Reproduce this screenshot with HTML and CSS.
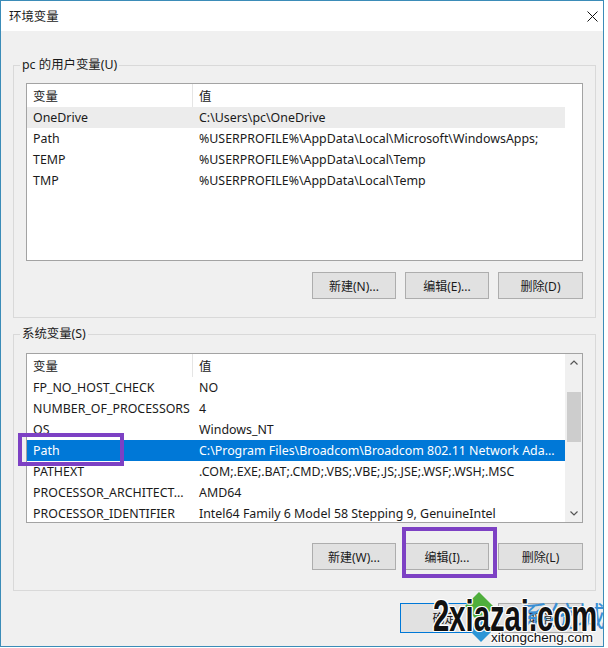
FILE: index.html
```html
<!DOCTYPE html>
<html lang="zh-CN">
<head>
    <meta charset="UTF-8">
    <meta name="viewport" content="width=device-width, initial-scale=1.0">
    <title>环境变量</title>
    <link rel="stylesheet" href="styles.css">
</head>
<body>
    <div class="window">
        <div class="titlebar">
            <span class="title">环境变量</span>
            <span class="close">
                <svg width="11" height="11" viewBox="0 0 11 11"><path d="M0.5 0.5L10.5 10.5M10.5 0.5L0.5 10.5" stroke="#111" stroke-width="1" fill="none"/></svg>
            </span>
        </div>

        <div class="content">
            <fieldset class="group group-user">
                <legend>pc 的用户变量(U)</legend>
                <div class="list list-user">
                    <div class="list-body">
                        <div class="row head"><span>变量</span><span>值</span></div>
                        <div class="row inactive"><span>OneDrive</span><span>C:\Users\pc\OneDrive</span></div>
                        <div class="row"><span>Path</span><span>%USERPROFILE%\AppData\Local\Microsoft\WindowsApps;</span></div>
                        <div class="row"><span>TEMP</span><span>%USERPROFILE%\AppData\Local\Temp</span></div>
                        <div class="row"><span>TMP</span><span>%USERPROFILE%\AppData\Local\Temp</span></div>
                    </div>
                    <div class="scroll-space"></div>
                </div>
                <div class="buttons">
                    <button class="btn">新建(N)...</button>
                    <button class="btn">编辑(E)...</button>
                    <button class="btn btn-wide">删除(D)</button>
                </div>
            </fieldset>

            <fieldset class="group group-system">
                <legend>系统变量(S)</legend>
                <div class="list list-system">
                    <div class="list-body">
                        <div class="row head"><span>变量</span><span>值</span></div>
                        <div class="row"><span>FP_NO_HOST_CHECK</span><span>NO</span></div>
                        <div class="row"><span>NUMBER_OF_PROCESSORS</span><span>4</span></div>
                        <div class="row"><span>OS</span><span>Windows_NT</span></div>
                        <div class="row selected"><span>Path</span><span>C:\Program Files\Broadcom\Broadcom 802.11 Network Ada...</span></div>
                        <div class="row"><span>PATHEXT</span><span>.COM;.EXE;.BAT;.CMD;.VBS;.VBE;.JS;.JSE;.WSF;.WSH;.MSC</span></div>
                        <div class="row"><span>PROCESSOR_ARCHITECT...</span><span>AMD64</span></div>
                        <div class="row"><span>PROCESSOR_IDENTIFIER</span><span>Intel64 Family 6 Model 58 Stepping 9, GenuineIntel</span></div>
                    </div>
                    <div class="scrollbar">
                        <div class="arrow">
                            <svg width="8" height="5" viewBox="0 0 8 5"><path d="M0.5 4.5L4 1L7.5 4.5" stroke="#555" stroke-width="1.2" fill="none"/></svg>
                        </div>
                        <div class="thumb"></div>
                        <div class="track-rest"></div>
                        <div class="arrow">
                            <svg width="8" height="5" viewBox="0 0 8 5"><path d="M0.5 0.5L4 4L7.5 0.5" stroke="#555" stroke-width="1.2" fill="none"/></svg>
                        </div>
                    </div>
                </div>
                <div class="buttons buttons-system">
                    <button class="btn">新建(W)...</button>
                    <button class="btn">编辑(I)...</button>
                    <button class="btn btn-wide">删除(L)</button>
                </div>
            </fieldset>

            <div class="dialog-buttons">
                <button class="btn btn-ok">确定</button>
                <button class="btn btn-cancel">取消</button>
            </div>
        </div>

        <!-- 标注框 -->
        <div class="mark mark-path"></div>
        <div class="mark mark-edit"></div>

        <!-- 水印 -->
        <div class="watermark">
            <svg class="wm-logo" width="40" height="54" viewBox="0 0 40 54">
                <polygon points="2,16 17,1 32,16 17,31" fill="#4fae3c"/>
                <polygon points="6,38 19,25 32,38 19,51" fill="#2c95d6"/>
            </svg>
            <span class="wm-cn">系统城</span>
            <span class="wm-big">2xiazai.com</span>
            <span class="wm-small">xitongcheng.com</span>
        </div>
    </div>
</body>
</html>
```

FILE: styles.css
```css
* {
    box-sizing: border-box;
}

body {
    margin: 0;
    background-color: #fff;
    font-family: "Noto Sans", "Noto Sans CJK SC", sans-serif;
    font-size: 12.4px;
    color: #1a1a1a;
}

.window {
    position: relative;
    width: 604px;
    height: 647px;
    border: 1px solid #3b8cb8;
    background-color: #f0f0f0;
    overflow: hidden;
}

.titlebar {
    height: 30px;
    background-color: #fff;
    display: flex;
    align-items: center;
    justify-content: space-between;
    padding: 0 5px 0 8px;
}

.close svg {
    display: block;
}

.content {
    padding: 0 7px 0 12px;
}

.group {
    margin: 26px 0 0;
    padding: 10px 12px 18px;
    border: 1px solid #d9d9d9;
    min-width: 0;
}

.group legend {
    padding: 0 2px;
    margin-left: -6px;
    line-height: 16px;
}

.group-system {
    margin-top: 8px;
    padding: 11px 12px 20px;
}

.list {
    display: flex;
    height: 178px;
    border: 1px solid #a3a3a3;
    background-color: #fff;
}

.list-system {
    height: 170px;
}

.list-body {
    flex: 1;
    overflow: hidden;
}

.scroll-space {
    width: 17px;
}

.row {
    display: grid;
    grid-template-columns: 166px 1fr;
    height: 21px;
    align-items: center;
    white-space: nowrap;
}

.row span {
    padding-left: 6px;
    overflow: hidden;
}

.row.head {
    height: 23px;
    align-items: stretch;
}

.row.head span {
    display: flex;
    align-items: center;
}

.row.head span:first-child {
    border-right: 1px solid #e5e5e5;
}

.row.inactive {
    background-color: #ececec;
}

.row.selected {
    background-color: #0078d7;
    color: #fff;
}

.scrollbar {
    width: 17px;
    background-color: #f0f0f0;
    display: flex;
    flex-direction: column;
}

.arrow {
    height: 17px;
    display: flex;
    align-items: center;
    justify-content: center;
}

.arrow svg {
    display: block;
}

.thumb {
    margin: 21px 1px 0 2px;
    height: 50px;
    background-color: #cdcdcd;
}

.track-rest {
    flex: 1;
}

.buttons {
    display: flex;
    justify-content: flex-end;
    gap: 9px;
    margin-top: 11px;
}

.buttons-system {
    margin-top: 20px;
}

.btn {
    width: 84px;
    height: 27px;
    padding: 0;
    border: 1px solid #adadad;
    background-color: #e1e1e1;
    font-family: inherit;
    font-size: 12px;
    color: #1a1a1a;
}

.btn-wide {
    width: 85px;
}

.dialog-buttons {
    display: flex;
    justify-content: flex-end;
    gap: 9px;
    margin-top: 12px;
    padding-right: 13px;
}

.btn-ok {
    width: 89px;
    height: 30px;
    border-color: #0078d7;
}

.btn-cancel {
    width: 85px;
    height: 30px;
}

.mark {
    position: absolute;
    border: 4px solid #7d41c4;
}

.mark-path {
    left: 17px;
    top: 432px;
    width: 106px;
    height: 33px;
}

.mark-edit {
    left: 401px;
    top: 526px;
    width: 95px;
    height: 51px;
}

.watermark {
    position: absolute;
    left: 420px;
    top: 584px;
    width: 184px;
    height: 62px;
}

.wm-logo {
    position: absolute;
    left: 41px;
    top: 6px;
}

.wm-cn {
    position: absolute;
    right: 0;
    top: 14px;
    font-family: "Noto Sans CJK SC", sans-serif;
    font-size: 28px;
    line-height: 32px;
    color: #3a8fd4;
}

.wm-big {
    position: absolute;
    left: 12px;
    top: 8px;
    font-family: "Liberation Sans", sans-serif;
    font-size: 45px;
    font-weight: bold;
    line-height: 45px;
    color: #111;
    transform: scaleX(0.65);
    transform-origin: left top;
    text-shadow: 1px 1px 0 #fff, -1px -1px 0 #fff, 1px -1px 0 #fff, -1px 1px 0 #fff, 2px 0 0 #fff, -2px 0 0 #fff;
}

.wm-small {
    position: absolute;
    left: 70px;
    top: 45px;
    font-family: "Liberation Sans", sans-serif;
    font-size: 13.5px;
    line-height: 15px;
    color: #111;
    text-shadow: 1px 1px 0 #fff, -1px -1px 0 #fff, 1px -1px 0 #fff, -1px 1px 0 #fff;
}
```
